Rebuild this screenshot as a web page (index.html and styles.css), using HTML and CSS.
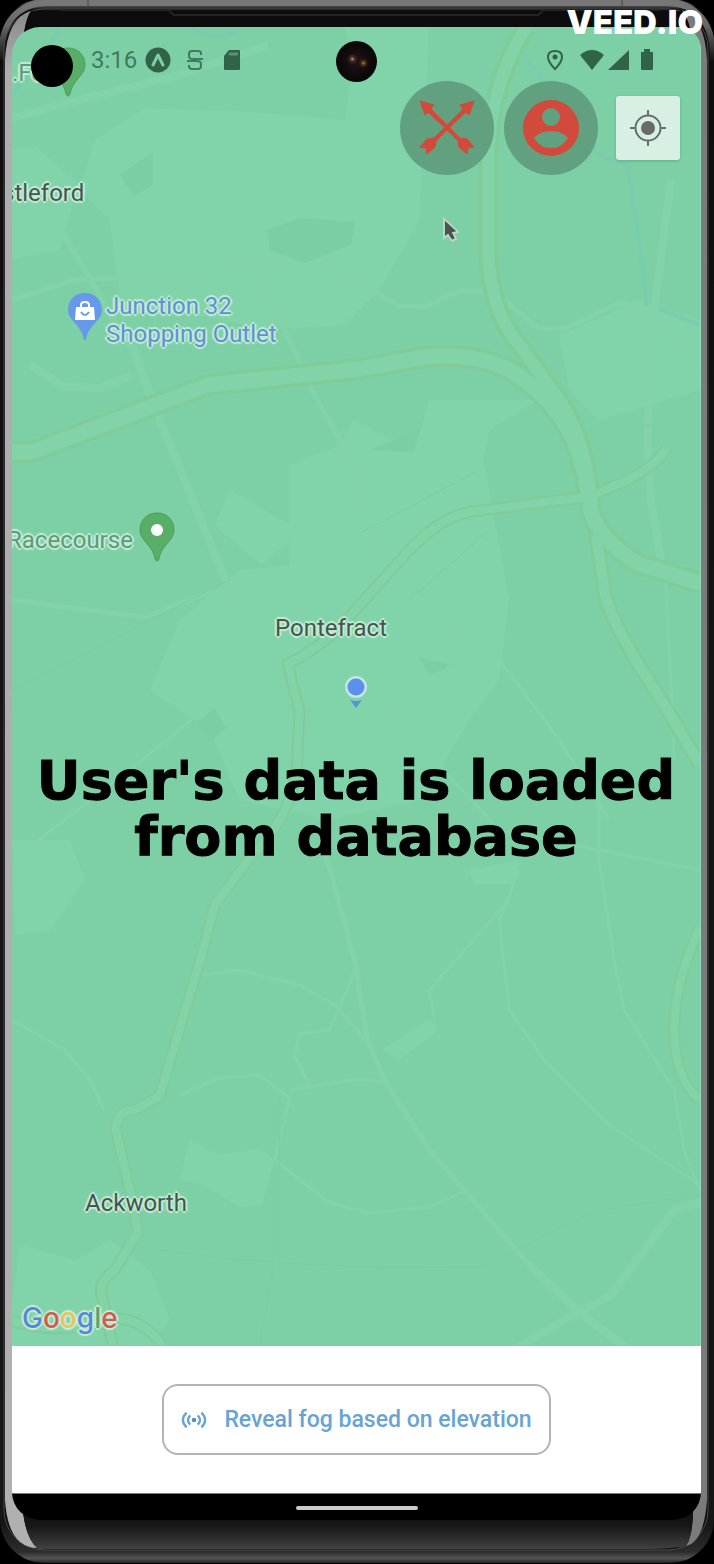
FILE: index.html
```html
<!DOCTYPE html>
<html lang="en">
<head>
<meta charset="utf-8">
<meta name="viewport" content="width=device-width, initial-scale=1">
<title>Fog map</title>
<link rel="stylesheet" href="styles.css">
</head>
<body>
<div class="phone">
  <svg class="frame" viewBox="0 0 714 1564" preserveAspectRatio="none" aria-hidden="true">
    <defs>
      <linearGradient id="topRim" x1="0" y1="0" x2="0" y2="1"><stop offset="0" stop-color="#777"/><stop offset="0.004" stop-color="#5a5a5a"/><stop offset="0.007" stop-color="#0d0d0d"/><stop offset="0.5" stop-color="#161616"/><stop offset="0.975" stop-color="#161616"/><stop offset="0.993" stop-color="#2d2d2d"/><stop offset="0.997" stop-color="#555"/><stop offset="1" stop-color="#222"/></linearGradient>
      <linearGradient id="rimFade" x1="0" y1="0" x2="0" y2="1"><stop offset="0" stop-color="#777"/><stop offset="0.4" stop-color="#666"/><stop offset="1" stop-color="#161616"/></linearGradient>
      <linearGradient id="sideRim" x1="0" y1="0" x2="0" y2="1"><stop offset="0" stop-color="#8a8a8a"/><stop offset="0.04" stop-color="#aeaeae"/><stop offset="1" stop-color="#b0b0b0"/></linearGradient>
      <linearGradient id="chin" x1="0" y1="0" x2="0" y2="1"><stop offset="0" stop-color="#0c0c0c"/><stop offset="0.97" stop-color="#0c0c0c"/><stop offset="0.985" stop-color="#171717"/><stop offset="1" stop-color="#414141"/></linearGradient>
    </defs>
    <rect width="714" height="1564" fill="#000"/>
    <rect x="0" y="-1" width="714" height="1564" rx="44" fill="url(#topRim)"/>
    <path d="M1 60Q0 3 50 3H664Q714 3 713 60" fill="none" stroke="url(#rimFade)" stroke-width="6"/>
    <rect x="4" y="9" width="704" height="1541" rx="40" fill="#101010" stroke="#4a4a4a" stroke-width="1"/>
    <path d="M5 60Q7 18 31 11Q23 22 22 60V1500Q24 1538 38 1548Q8 1548 5 1500Z" fill="url(#sideRim)"/>
    <path d="M707 60Q705 18 682 10Q693 24 693 60V1500Q694 1534 686 1546Q704 1542 707 1500Z" fill="#7b7b7b"/>
    <path d="M31 11H682Q693 24 693 60V1500Q694 1534 686 1546Q670 1549 650 1549H38Q24 1538 22 1500V60Q23 22 31 11Z" fill="url(#chin)"/>
    <path d="M60 10H168L174 15H538L544 10H660" fill="none" stroke="#242424" stroke-width="2"/>
    <path d="M88 0V8M622 0V7" stroke="#444" stroke-width="1"/>
  </svg>

  <main class="screen">
    <section class="map" aria-label="Map">
      <svg class="map-tiles" viewBox="12 27 689 1319" preserveAspectRatio="none" aria-hidden="true">
        <rect x="12" y="27" width="689" height="1319" fill="#7dd0a5"/>
        <g fill="#81d3a9">
          <path d="M95 140L145 108L250 112L345 120L354 60L345 27H430L420 220L380 290L345 325L270 330L120 300L110 220L80 190Z"/>
          <path d="M12 150L36 146L78 185L60 250L12 260Z"/>
          <path d="M290 465L340 445L354 420L415 450L430 400L540 400L490 430L484 460L510 600L500 680L470 720L440 770L420 800L330 820L240 800L210 730L150 690L180 620L240 570L290 565Z"/>
          <path d="M560 335L640 300L701 320V390L600 420L570 390Z"/>
          <path d="M230 490L300 530L262 565L215 525Z"/>
          <path d="M12 840L70 840L85 880L50 930L15 935Z"/>
          <path d="M190 1140L220 1155L260 1148L275 1160L262 1205L240 1208L205 1185L180 1180Z"/>
          <path d="M20 1245L75 1260L110 1240L150 1270L170 1320L150 1346H12V1300Z"/>
          <path d="M382 1050L430 1020L440 1030L400 1060ZM470 870L520 860L515 885L475 885Z"/>
        </g>
        <g fill="#7acea3">
          <path d="M120 175L153 152V185L135 196ZM268 230L300 218L355 222L352 245L305 263L270 250Z"/>
          <path d="M195 725L215 708L226 728L212 740ZM420 658L455 665L430 675ZM370 450L420 430L414 452Z"/>
        </g>
        <g fill="none" stroke="#79cdae" stroke-width="4">
          <path d="M525 55L550 90L600 155L628 165L640 240L648 310"/><path d="M660 309L701 325"/><path d="M190 27Q215 45 240 29M12 95L60 30"/>
        </g>
        <g fill="none" stroke="#82d3aa" stroke-linejoin="round">
          <g stroke-width="8">
            <path d="M132 345L160 420L235 602"/><path d="M672 180L655 310L648 440L652 500L662 560"/>
            <path d="M12 118L60 105L190 72L268 45"/>
            <path d="M30 365L65 387L100 388L132 376"/>
            <path d="M530 1265L580 1312L625 1346M580 1312L520 1346M580 1312L612 1295L675 1210L701 1202"/>
          </g>
          <g stroke-width="5">
            <path d="M12 300L75 280L240 270L330 268L400 306L425 307L460 291L490 291"/>
            <path d="M505 300L540 329L565 329L620 303L655 310L701 370"/>
            <path d="M260 275L315 395L355 465L380 560"/>
            <path d="M325 850L355 960L368 1040L385 1080L430 1150L530 1265"/>
            <path d="M12 600L145 617L230 585M60 228L132 350"/>
          </g>
          <g stroke-width="3">
            <path d="M350 730L430 700L465 640L380 580M287 662L240 680L130 770L12 860"/>
            <path d="M12 1020L65 1050L90 1080L104 1110M180 1095L220 1078L260 1075L290 1098L275 1160L330 1203L370 1213L430 1207L468 1190"/>
            <path d="M200 975L240 970L300 985L340 1008L330 1030L300 1034L295 1055L310 1085M290 1090L360 1079L382 1082M355 970L340 1010L370 1045"/>
            <path d="M520 870L500 920L510 1010L545 1060L610 1125L701 1185M600 780V860L615 960L625 1010L675 1090L685 1150L701 1190"/>
            <path d="M520 400L440 480L380 540M600 380L655 335M665 560L672 680L675 760M500 660L560 740L610 820M360 680L500 830L701 870"/>
            <path d="M505 905L430 990L435 1020"/>
          </g>
        </g>
        <g fill="none" stroke="#79cda1" stroke-width="1"><path d="M354 537L480 470M12 690L230 580M410 600L490 530M610 425H680M280 1260V1100M260 1346L275 1260M160 1250Q300 1270 480 1267L600 1210L701 1195"/></g>
        <g fill="none" stroke-linejoin="round">
          <g stroke="#80cc98">
            <path stroke-width="12" d="M668 448Q655 470 610 488Q590 498 570 499L470 512Q440 518 410 550L345 622Q318 650 288 664L300 712L297 770Q290 820 250 858L215 905L200 962L178 1035L160 1096L135 1110Q116 1110 116 1130L130 1190L138 1232L115 1270Q96 1282 103 1300L113 1346"/>
            <path stroke-width="12" d="M12 1321Q60 1334 85 1324Q135 1306 163 1346M701 928Q676 980 675 1030Q676 1080 701 1100"/>
            <path stroke-width="16" d="M597 535L606 595Q615 630 660 696L701 765"/>
            <path stroke-width="22" d="M12 452H32L208 385L360 369L425 357Q475 352 510 370Q550 392 575 440Q588 475 592 512Q600 540 640 564L701 583"/>
            <path stroke-width="20" d="M527 27Q490 85 489 160V250Q490 310 520 345L560 400Q590 445 592 512"/>
          </g>
          <g stroke="#82d3a8">
            <path stroke-width="8" d="M668 448Q655 470 610 488Q590 498 570 499L470 512Q440 518 410 550L345 622Q318 650 288 664L300 712L297 770Q290 820 250 858L215 905L200 962L178 1035L160 1096L135 1110Q116 1110 116 1130L130 1190L138 1232L115 1270Q96 1282 103 1300L113 1346"/>
            <path stroke-width="8" d="M12 1321Q60 1334 85 1324Q135 1306 163 1346M701 928Q676 980 675 1030Q676 1080 701 1100"/>
            <path stroke-width="10" d="M597 535L606 595Q615 630 660 696L701 765"/>
            <path stroke-width="15" d="M12 452H32L208 385L360 369L425 357Q475 352 510 370Q550 392 575 440Q588 475 592 512Q600 540 640 564L701 583"/>
            <path stroke-width="12" d="M527 27Q490 85 489 160V250Q490 310 520 345L560 400Q590 445 592 512"/>
          </g>
        </g>
      </svg>

      <span class="place park pin-fort">.Fo</span>
      <svg class="pin pin-park" width="36" height="50" viewBox="0 0 36 50" aria-hidden="true"><path d="M18 1C8 1 1 8 1 18C1 29 14 33 16 47Q18 51 20 47C22 33 35 29 35 18C35 8 28 1 18 1Z" fill="#59ae67" stroke="#4c9d5f"/></svg>
      <span class="place pin-castleford">stleford</span>
      <svg class="pin pin-shop" width="36" height="50" viewBox="0 0 36 50" aria-hidden="true"><path d="M18 1C8 1 1 8 1 18C1 29 15 33 17 48H19C21 33 35 29 35 18C35 8 28 1 18 1Z" fill="#6699ea"/><path d="M9 15H27L28 28H8Z" fill="#fff"/><path d="M14 15V13Q14 10 18 10T22 13V15" fill="none" stroke="#fff" stroke-width="2"/><path d="M14 20Q18 26 22 20" fill="none" stroke="#6699ea" stroke-width="2"/></svg>
      <span class="place shop pin-junction">Junction 32<br>Shopping Outlet</span>
      <span class="place park pin-racecourse">Racecourse</span>
      <svg class="pin pin-race" width="36" height="50" viewBox="0 0 36 50" aria-hidden="true"><path d="M18 1C8 1 1 8 1 18C1 29 14 33 16 47Q18 51 20 47C22 33 35 29 35 18C35 8 28 1 18 1Z" fill="#59ae67" stroke="#4c9d5f"/><circle cx="18" cy="18" r="6" fill="#fff"/></svg>
      <span class="place pin-pontefract">Pontefract</span>
      <svg class="pin pin-me" width="28" height="36" viewBox="0 0 28 36" aria-hidden="true"><circle cx="14" cy="14" r="11" fill="#c5e4e4"/><circle cx="14" cy="14" r="8.500" fill="#5b90ec"/><path d="M8 27Q14 29 20 27L14 35Z" fill="#4f98d6"/></svg>
      <span class="place pin-ackworth">Ackworth</span>
      <span class="google" aria-label="Google"><span class="g-blue">G</span><span class="g-red">o</span><span class="g-yellow">o</span><span class="g-blue">g</span><span class="g-green">l</span><span class="g-red">e</span></span>

      <header class="status">
        <span class="lens"></span>
        <time class="clock">3:16</time>
        <svg width="26" height="26" viewBox="0 0 26 26" aria-hidden="true"><circle cx="13" cy="13" r="12.500" fill="#316349"/><path d="M8 18L13 8L18 18" fill="none" stroke="#7dd0a5" stroke-width="3" stroke-linejoin="round" stroke-linecap="round"/></svg>
        <svg class="s-icon" width="18" height="22" viewBox="0 0 18 22" aria-hidden="true"><path d="M15 6V4Q15 2 12 2H6Q3 2 3 5V7Q3 10 7 10H17M1 12H11Q15 12 15 15V17Q15 20 12 20H6Q3 20 3 17V16" fill="none" stroke="#417a5d" stroke-width="2"/></svg>
        <svg width="18" height="22" viewBox="0 0 18 22" aria-hidden="true"><path d="M6 1H16Q17 1 17 2V20Q17 21 16 21H2Q1 21 1 20V7Z" fill="#316349"/><path d="M6 5H15" stroke="#5b9276" stroke-width="3"/></svg>
        <span class="camera"></span>
        <span class="signals">
          <svg width="18" height="22" viewBox="0 0 18 22" aria-hidden="true"><path d="M9 20Q2 13 2 8Q2 2 9 2T16 8Q16 13 9 20Z" fill="none" stroke="#316349" stroke-width="2"/><circle cx="9" cy="8" r="2.500" fill="#316349"/></svg>
          <svg class="wifi" width="26" height="22" viewBox="0 0 26 22" aria-hidden="true"><path d="M13 21L1 6Q13-4 25 6Z" fill="#316349"/></svg>
          <svg width="22" height="22" viewBox="0 0 22 22" aria-hidden="true"><path d="M0 21L21 1V21Z" fill="#316349"/></svg>
          <svg class="battery" width="14" height="22" viewBox="0 0 14 22" aria-hidden="true"><path d="M1 3H4V0H10V3H13V20Q13 21 12 21H2Q1 21 1 20Z" fill="#316349"/></svg>
        </span>
      </header>

      <nav class="actions" aria-label="Map tools">
        <button class="round" type="button" aria-label="Battles">
          <svg width="56" height="56" viewBox="0 0 56 56" aria-hidden="true"><g fill="#d24a3b" stroke="#d24a3b" stroke-width="1" stroke-linejoin="round"><path d="M1 1L15 5L12 9L28 25L41 38L48 39L55 47L49 48L48 54L40 47L39 41L26 28L9 12L6 15Z"/><path d="M55 1L41 5L44 9L28 25L15 38L8 39L1 47L7 48L8 54L16 47L17 41L30 28L47 12L50 15Z"/></g></svg>
        </button>
        <button class="round" type="button" aria-label="Profile">
          <svg width="56" height="56" viewBox="0 0 56 56" aria-hidden="true"><path fill="#d24a3b" fill-rule="evenodd" d="M28 0A28 28 0 1 1 28 56A28 28 0 1 1 28 0ZM28 8A9 9 0 1 0 28 26A9 9 0 1 0 28 8ZM11 38Q17 48 28 48T45 38Q39 31 28 31T11 38Z"/></svg>
        </button>
        <button class="locate" type="button" aria-label="My location">
          <svg width="36" height="36" viewBox="0 0 36 36" aria-hidden="true"><g stroke="#686f6b" stroke-width="2" fill="none"><circle cx="18" cy="18" r="12.500"/><path d="M18 0V6M18 30V36M0 18H6M30 18H36"/></g><circle cx="18" cy="18" r="7" fill="#686b6a"/></svg>
        </button>
      </nav>

      <svg class="pin cursor" width="18" height="26" viewBox="0 0 18 26" aria-hidden="true"><path d="M2 2V21L6 18L10 24L14 22L11 16L16 15Z" fill="#4b5550" stroke="#b7d8c8" stroke-width="2"/><path d="M3 4V18L6 16L9 21L12 20L9 14H14Z" fill="#4b5550"/></svg>
      <h1 class="caption">User's data is loaded<br>from database</h1>
    </section>

    <section class="panel">
      <button class="reveal" type="button">
        <svg width="26" height="20" viewBox="0 0 28 20" aria-hidden="true"><g fill="none" stroke="#67a4d4" stroke-width="2.500"><path d="M6 2Q-2 10 6 18M22 2Q30 10 22 18M10 5Q5 10 10 15M18 5Q23 10 18 15"/></g><circle cx="14" cy="10" r="2.500" fill="#5293c6"/></svg>
        <span>Reveal fog based on elevation</span>
      </button>
    </section>
    <footer class="home"><span class="home-bar"></span></footer>
  </main>
  <span class="watermark">VEED.IO</span>
</div>
</body>
</html>
```
FILE: styles.css
```css
* { box-sizing: border-box; }

body {
  margin: 0;
  background: #000;
  font-family: Roboto, "Liberation Sans", sans-serif;
}

.phone {
  position: relative;
  display: flex;
  min-height: 100vh;
  padding: 27px 13px 44px 12px;
  overflow: hidden;
}

.frame {
  position: absolute;
  inset: 0;
  width: 100%;
  height: 100%;
}

.screen {
  position: relative;
  flex: 1;
  min-width: 0;
  display: flex;
  flex-direction: column;
  border-radius: 28px 22px 28px 28px;
  overflow: hidden;
}

.map {
  position: relative;
  flex: 1;
  overflow: hidden;
  border-right: 1px solid #8fdcb5;
}

.map-tiles {
  position: absolute;
  inset: 0;
  width: 100%;
  height: 100%;
}

.place,
.pin,
.google { position: absolute; }

.place {
  font-size: 24px;
  line-height: 28px;
  white-space: nowrap;
  color: #46554e;
  text-shadow: 0 2px 1px #c4ecd7, 0 -2px 1px #c4ecd7, 2px 0 1px #c4ecd7, -2px 0 1px #c4ecd7, 0 0 3px #c4ecd7;
}

.park { color: #5d9a78; }
.shop { color: #5d92d2; }

.pin-fort { left: 0; top: 32px; }
.pin-park { left: 38px; top: 20px; }
.pin-castleford { left: -10px; top: 152px; }
.pin-shop { left: 55px; top: 265px; }
.pin-junction { left: 94px; top: 265px; }
.pin-racecourse { left: -5px; top: 499px; }
.pin-race { left: 127px; top: 485px; }
.pin-pontefract { left: 263px; top: 587px; }
.pin-me { left: 330px; top: 646px; }
.pin-ackworth { left: 73px; top: 1162px; }
.cursor { left: 430px; top: 190px; }

.google {
  left: 10px;
  bottom: 10px;
  font-family: Inter, sans-serif;
  font-size: 28px;
  font-weight: 500;
  line-height: 36px;
  text-shadow: 0 2px 1px #c8ecd8, 0 -2px 1px #c8ecd8, 2px 0 1px #c8ecd8, -2px 0 1px #c8ecd8;
}

.g-blue { color: #5588d8; }
.g-red { color: #cf5c4c; }
.g-yellow { color: #e5c65a; }
.g-green { color: #58a56c; }

.status {
  position: relative;
  display: flex;
  align-items: center;
  height: 66px;
  padding: 0 46px 0 19px;
}

.lens {
  width: 42px;
  height: 42px;
  margin: 12px 18px 0 0;
  border-radius: 50%;
  background: #000;
}

.clock {
  margin-right: 8px;
  font-size: 24px;
  line-height: 28px;
  color: #417a5d;
}

.s-icon { margin: 0 19px 0 15px; }

.camera {
  position: absolute;
  left: 50%;
  top: 14px;
  width: 41px;
  height: 41px;
  margin-left: -20px;
  border-radius: 50%;
  background:
    radial-gradient(circle at 40% 44%, #c9a08c 0, #4a302c 6%, transparent 16%),
    radial-gradient(circle at 67% 54%, #b07a32 0, #3c2813 7%, transparent 14%),
    radial-gradient(circle, #241318 0, #0a0808 60%);
}

.signals {
  display: flex;
  align-items: center;
  margin-left: auto;
}

.wifi { margin: 0 3px 0 15px; }
.battery { margin-left: 10px; }

.actions {
  position: relative;
  display: flex;
  justify-content: flex-end;
  align-items: center;
  gap: 10px;
  margin-top: -12px;
  padding-right: 20px;
}

button {
  display: flex;
  align-items: center;
  justify-content: center;
  padding: 0;
  border: 0;
  font: inherit;
  cursor: pointer;
}

.round {
  width: 94px;
  height: 94px;
  border-radius: 50%;
  background: #62a17f;
}

.locate {
  width: 64px;
  height: 64px;
  margin-left: 8px;
  border-radius: 3px;
  background: #d8efe3;
  box-shadow: 0 1px 3px #5fae88;
}

.caption {
  position: absolute;
  left: 0;
  right: 0;
  top: 726px;
  margin: 0;
  font-family: "DejaVu Sans", sans-serif;
  font-size: 54px;
  font-weight: 700;
  line-height: 56px;
  text-align: center;
  white-space: nowrap;
  color: #000;
  -webkit-text-stroke: 1px #000;
}

.panel {
  display: flex;
  justify-content: center;
  padding: 38px 16px;
  background: #fff;
}

.reveal {
  gap: 17px;
  height: 71px;
  padding: 0 17px;
  border: 2px solid #b4b4b6;
  border-radius: 16px;
  background: #fff;
  font-size: 23px;
  font-weight: 500;
  white-space: nowrap;
  color: #67a4d4;
}

.home {
  display: flex;
  justify-content: center;
  height: 27px;
  padding-top: 12px;
  border-top: 1px solid #777;
  background: #000;
}

.home-bar {
  width: 122px;
  height: 4px;
  border-radius: 2px;
  background: #cfcaca;
}

.watermark {
  position: absolute;
  right: 11px;
  top: 2px;
  font-family: Inter, sans-serif;
  font-size: 33px;
  font-weight: 900;
  line-height: 40px;
  color: #fff;
}
```
